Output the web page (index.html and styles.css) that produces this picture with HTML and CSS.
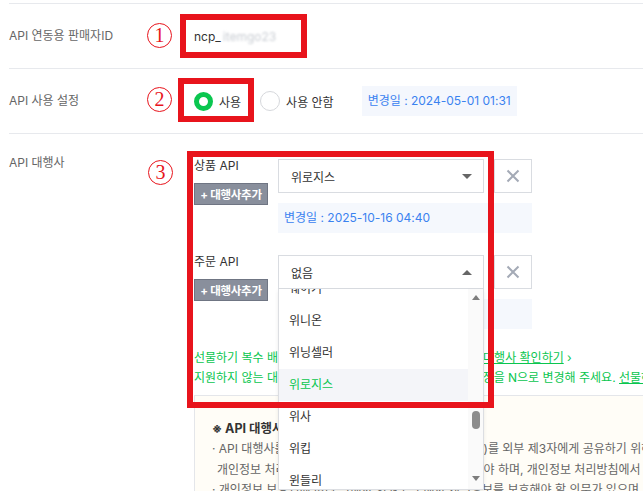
FILE: index.html
```html
<!DOCTYPE html>
<html lang="ko">
<head>
<meta charset="utf-8">
<title>API 설정</title>
<link rel="stylesheet" href="styles.css">
</head>
<body>
<div class="page">
  <div class="row">
    <div class="label">API 연동용 판매자ID</div>
    <div class="content"><span class="seller-id">ncp_<span class="masked">itemgo23</span></span></div>
  </div>
  <div class="row">
    <div class="label">API 사용 설정</div>
    <div class="content radios">
      <label class="radio"><span class="dot on"></span>사용</label>
      <label class="radio"><span class="dot"></span>사용 안함</label>
      <span class="date-badge">변경일 : 2024-05-01 01:31</span>
    </div>
  </div>
  <div class="row row-agency">
    <div class="label">API 대행사</div>
    <div class="content agency">
      <div class="api-group">
        <div class="api-side">
          <div class="api-name">상품 API</div>
          <button class="add-btn">+ 대행사추가</button>
        </div>
        <div class="api-main">
          <div class="select-line">
            <div class="select"><span>위로지스</span><span class="caret down"></span></div>
            <button class="remove"><svg width="14" height="14" viewBox="0 0 14 14"><path d="M1.5 1.5L12.5 12.5M12.5 1.5L1.5 12.5" stroke="#a4aab6" stroke-width="2" fill="none"/></svg></button>
          </div>
          <div class="date-box">변경일 : 2025-10-16 04:40</div>
        </div>
      </div>
      <div class="api-group second">
        <div class="api-side">
          <div class="api-name">주문 API</div>
          <button class="add-btn">+ 대행사추가</button>
        </div>
        <div class="api-main">
          <div class="select-line">
            <div class="select open"><span>없음</span><span class="caret up"></span></div>
            <button class="remove"><svg width="14" height="14" viewBox="0 0 14 14"><path d="M1.5 1.5L12.5 12.5M12.5 1.5L1.5 12.5" stroke="#a4aab6" stroke-width="2" fill="none"/></svg></button>
          </div>
          <div class="date-box">변경일 : 2025-10-16 04:40</div>
          <div class="dropdown">
            <ul class="options">
              <li>웨이기</li>
              <li>위니온</li>
              <li>위닝셀러</li>
              <li class="selected">위로지스</li>
              <li>위사</li>
              <li>위킵</li>
              <li>윈들리</li>
            </ul>
            <div class="scrollbar">
              <span class="sb-arrow sb-up"></span>
              <span class="sb-thumb"></span>
              <span class="sb-arrow sb-down"></span>
            </div>
          </div>
        </div>
      </div>
      <div class="notes">
        <div class="note">선물하기 복수 배송지 주문수집 기능을 모두 지원하는 API <a class="link">대행사 확인하기</a> ›</div>
        <div class="note">지원하지 않는 대행사를 이용하시는 경우에 복수 배송지 설정을 N으로 변경해 주세요. <a class="link">선물하기 복수 배송지 설정</a></div>
      </div>
      <div class="info">
        <div class="info-title">※ API 대행사 이용 시 유의사항</div>
        <div class="info-line">· API 대행사를 이용할 시, 구매자의 개인정보(주문정보)를 외부 제3자에게 공유하기 위해</div>
        <div class="info-line indent">개인정보 처리 위탁에 대한 별도의 동의를 반드시 받아야 하며, 개인정보 처리방침에서 수탁자를 공개해야 합니다.</div>
        <div class="info-line">· 개인정보 보호법에 따라 판매자 회원도 구매자 개인정보를 보호해야 할 의무가 있으며, 한번정</div>
      </div>
    </div>
  </div>

  <span class="mark m1">1</span>
  <span class="mark m2">2</span>
  <span class="mark m3">3</span>
  <div class="hl hl1"></div>
  <div class="hl hl2"></div>
  <div class="hl hl3"></div>
</div>
</body>
</html>
```
FILE: styles.css
```css
* { box-sizing: border-box; }
html, body { margin: 0; padding: 0; background: #fff; }
body { font-family: Inter, "Noto Sans CJK KR", sans-serif; font-size: 12px; color: #333; }

.page {
  position: relative;
  width: 643px;
  height: 491px;
  overflow: hidden;
  padding: 3px 0 0 9px;
}

.row {
  display: flex;
  align-items: center;
  height: 65px;
  border-top: 1px solid #e7e9ed;
  width: 700px;
}
.label { width: 185px; flex: none; color: #666; line-height: 18px; }
.content { flex: 1; white-space: nowrap; }

.seller-id { color: #333; }
.masked { color: #c9cdd3; filter: blur(1.3px); margin-left: 2px; }

.radios { display: flex; align-items: center; }
.radio { display: flex; align-items: center; gap: 6px; margin-right: 19px; color: #333; }
.dot { width: 20px; height: 20px; border-radius: 50%; border: 1px solid #d6d8dc; background: #fff; }
.dot.on { width: 19px; height: 19px; border: 5px solid #0ac64f; }
.date-badge {
  margin-left: 9px;
  height: 30px;
  line-height: 30px;
  padding: 0 6px;
  background: #f4f7fd;
  color: #3a82f0;
}

.row-agency { height: auto; align-items: flex-start; }
.row-agency .label { padding-top: 20px; }
.agency { padding-top: 23px; }

.api-group { display: flex; }
.api-group.second { margin-top: 20px; }
.api-side { width: 84px; flex: none; }
.api-name { line-height: 18px; color: #333; }
.add-btn {
  display: block;
  margin-top: 8px;
  width: 74px;
  height: 22px;
  padding: 0;
  border: 1px solid #6f7583;
  background: #898f9c;
  color: #fff;
  font-family: inherit;
  font-size: 11.5px;
  font-weight: 700;
  letter-spacing: -0.3px;
}
.api-main { position: relative; padding-top: 2px; width: 254px; }
.select-line { display: flex; gap: 10px; }
.select {
  width: 206px;
  height: 34px;
  border: 1px solid #d9dce1;
  background: #fff;
  display: flex;
  align-items: center;
  justify-content: space-between;
  padding: 0 11px 0 12px;
  color: #333;
}
.caret { width: 0; height: 0; border-left: 5px solid transparent; border-right: 5px solid transparent; }
.caret.down { border-top: 5px solid #666; }
.caret.up { border-bottom: 5px solid #666; }
.remove {
  width: 38px;
  height: 34px;
  border: 1px solid #d9dce1;
  background: #fff;
  padding: 0;
  display: flex;
  align-items: center;
  justify-content: center;
}
.date-box {
  margin-top: 10px;
  height: 30px;
  line-height: 30px;
  padding-left: 6px;
  background: #f5f8fd;
  color: #3a82f0;
}

.dropdown {
  position: absolute;
  top: 36px;
  left: 0;
  width: 206px;
  height: 201px;
  background: #fff;
  border: 1px solid #dcdee2;
  border-top: none;
  box-shadow: 0 2px 4px rgba(0, 0, 0, 0.08);
  display: flex;
  overflow: hidden;
  z-index: 2;
}
.options { list-style: none; margin: -16px 0 0; padding: 0; flex: 1; }
.options li { height: 32px; line-height: 32px; padding-left: 10px; color: #333; }
.options li.selected { background: #f4f5f9; color: #0ac64f; }
.scrollbar {
  width: 15px;
  flex: none;
  background: #fafafa;
  display: flex;
  flex-direction: column;
  align-items: center;
}
.sb-arrow { width: 0; height: 0; border-left: 4px solid transparent; border-right: 4px solid transparent; }
.sb-up { margin-top: 6px; border-bottom: 5px solid #7d7d7d; }
.sb-down { margin-top: auto; margin-bottom: 8px; border-top: 5px solid #7d7d7d; }
.sb-thumb { margin-top: 111px; width: 8px; height: 18px; border-radius: 4px; background: #8c8c8c; }

.notes { margin-top: 19px; }
.note { line-height: 20px; color: #0ac64f; white-space: nowrap; }
.link { color: #0ac64f; text-decoration: underline; }

.info {
  margin-top: 7px;
  width: 620px;
  border: 1px solid #e4e6ea;
  background: #fffdf7;
  padding: 23px 17px;
}
.info-title { font-weight: 700; color: #333; line-height: 20px; font-size: 12.5px; }
.info-line { color: #666; line-height: 20.5px; white-space: nowrap; }
.info-line.indent { padding-left: 5px; }

.mark {
  position: absolute;
  width: 25px;
  height: 25px;
  border: 1.5px solid #e8141c;
  border-radius: 50%;
  color: #e8141c;
  font-family: "Liberation Serif", serif;
  font-size: 20px;
  line-height: 22px;
  text-align: center;
  z-index: 5;
}
.m1 { left: 147px; top: 23px; }
.m2 { left: 147px; top: 87px; }
.m3 { left: 148px; top: 160px; }

.hl { position: absolute; border: 6px solid #e8141c; z-index: 6; }
.hl1 { left: 180px; top: 14px; width: 127px; height: 44px; }
.hl2 { left: 178px; top: 78px; width: 76px; height: 44px; }
.hl3 { left: 187px; top: 151px; width: 307px; height: 257px; }
```
